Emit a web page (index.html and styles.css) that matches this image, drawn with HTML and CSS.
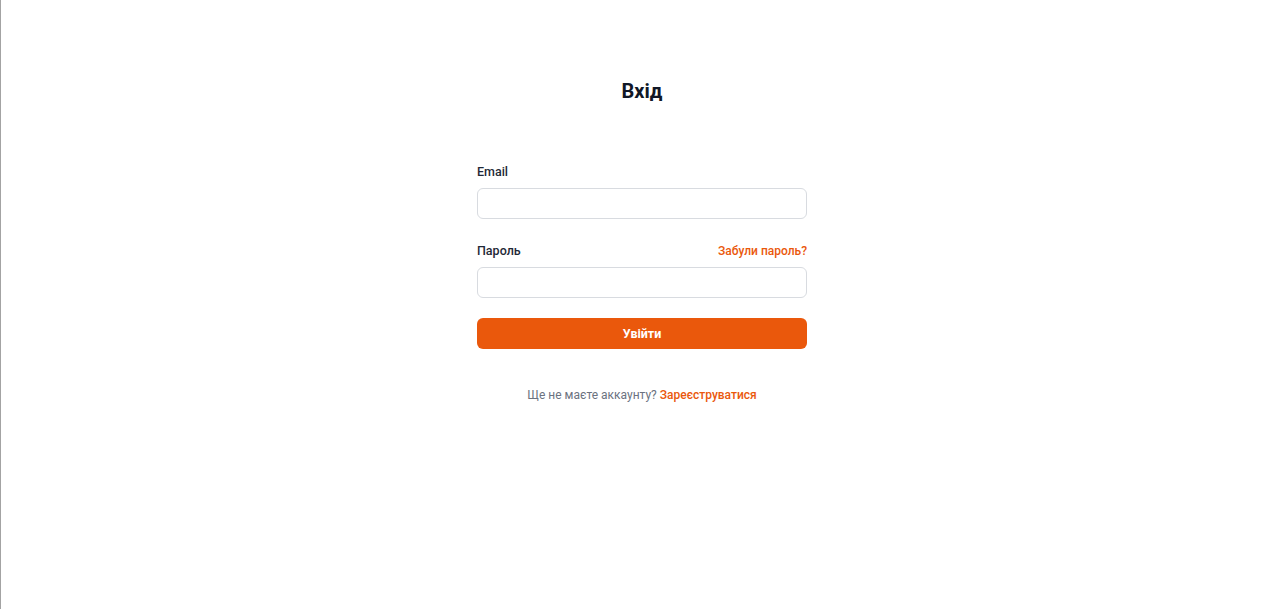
FILE: index.html
```html
<!DOCTYPE html>
<html lang="uk">
<head>
<meta charset="utf-8">
<title>Вхід</title>
<link rel="stylesheet" href="styles.css">
</head>
<body>
<div class="page">
  <main class="auth">
    <h1 class="auth-title">Вхід</h1>
    <form class="auth-form">
      <div class="field">
        <label class="field-label" for="email">Email</label>
        <input class="field-input" id="email" type="email">
      </div>
      <div class="field">
        <div class="field-head">
          <label class="field-label" for="password">Пароль</label>
          <a class="link" href="#">Забули пароль?</a>
        </div>
        <input class="field-input" id="password" type="password">
      </div>
      <button class="btn-primary" type="button">Увійти</button>
    </form>
    <p class="auth-footer">Ще не маєте аккаунту? <a class="link" href="#">Зареєструватися</a></p>
  </main>
</div>
</body>
</html>
```
FILE: styles.css
```css
* { box-sizing: border-box; }
html, body { margin: 0; padding: 0; background: #fff; }
body {
  font-family: Roboto, "Noto Sans", sans-serif;
  color: #1f2937;
}
.page {
  min-height: 609px;
  border-left: 1px solid #a3a3a3;
  padding-left: 3px;
  display: flex;
  justify-content: center;
}
.auth {
  width: 330px;
  padding-top: 77px;
  display: flex;
  flex-direction: column;
}
.auth-title {
  margin: 0 0 56px;
  font-size: 20px;
  line-height: 28px;
  font-weight: 700;
  text-align: center;
  color: #111827;
}
.auth-form {
  display: flex;
  flex-direction: column;
}
.field { display: flex; flex-direction: column; margin-bottom: 21px; }
.field-head { display: flex; justify-content: space-between; align-items: center; margin: 1px 0 6px; }
.field-label {
  font-size: 12.5px;
  line-height: 20px;
  font-weight: 500;
  color: #1f2937;
  margin: 1px 0 6px;
}
.field-head .field-label { margin: 0; }
.field-input {
  height: 31px;
  border: 1px solid #d8dbe0;
  border-radius: 6px;
  background: #fff;
  padding: 0 10px;
  font: inherit;
  outline: none;
}
.field:last-of-type { margin-bottom: 20px; }
.link {
  color: #ea580c;
  text-decoration: none;
  font-size: 12px;
  line-height: 20px;
  font-weight: 500;
}
.btn-primary {
  height: 31px;
  border: none;
  border-radius: 6px;
  background: #ea580c;
  color: #fff;
  font-family: inherit;
  font-size: 12.5px;
  font-weight: 700;
  cursor: pointer;
}
.auth-footer {
  margin: 36px 0 0;
  text-align: center;
  font-size: 12px;
  line-height: 20px;
  color: #6b7280;
}
```
